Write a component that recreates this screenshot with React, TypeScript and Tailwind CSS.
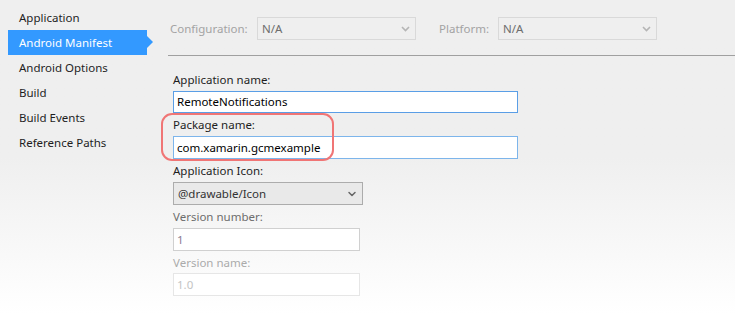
import { ChevronDown } from "lucide-react";

const navItems = [
  "Application",
  "Android Manifest",
  "Android Options",
  "Build",
  "Build Events",
  "Reference Paths",
];

function Chevron({ className }: { className?: string }) {
  return (
    <svg width="9" height="6" viewBox="0 0 9 6" className={className}>
      <path d="M1 1 L4.5 4.5 L8 1" fill="none" stroke="currentColor" strokeWidth="1.6" />
    </svg>
  );
}

function TopSelect({ label, value, labelWidth }: { label: string; value: string; labelWidth: string }) {
  return (
    <div className="flex items-center">
      <span className={`text-[#a3a3a3] ${labelWidth}`}>{label}</span>
      <div className="w-[159px] h-[23px] border border-[#d9d9d9] bg-[#efefef] flex items-center justify-between pl-[4px] pr-[5px]">
        <span className="text-[#6d6d6d]">{value}</span>
        <Chevron className="text-[#b5b5b5]" />
      </div>
    </div>
  );
}

export default function App() {
  return (
    <div
      className="w-[735px] h-[314px] flex text-[11.5px] bg-gradient-to-b from-[#efefef] from-50% to-[#ffffff] overflow-hidden relative"
      style={{ fontFamily: '"Noto Sans", "Open Sans", sans-serif' }}
    >
      {/* sidebar */}
      <div className="w-[160px] pt-[5px] shrink-0">
        {navItems.map((item) => {
          const active = item === "Android Manifest";
          return (
            <div key={item} className="relative h-[25px] flex items-center">
              {active && (
                <div className="absolute left-[8px] top-0 h-[25px] w-[139px] bg-[#3399ff]">
                  <div className="absolute right-[-6px] top-[6px] w-0 h-0 border-y-[6px] border-y-transparent border-l-[6px] border-l-[#3399ff]" />
                </div>
              )}
              <span className={`relative pl-[19px] ${active ? "text-white" : "text-[#1e1e1e]"}`}>{item}</span>
            </div>
          );
        })}
      </div>

      {/* main */}
      <div className="flex-1 flex flex-col">
        <div className="flex items-start gap-[23px] pl-[10px] pt-[17px] h-[55px]">
          <TopSelect label="Configuration:" value="N/A" labelWidth="w-[87px]" />
          <TopSelect label="Platform:" value="N/A" labelWidth="w-[59px]" />
        </div>
        <div className="ml-[8px] h-px bg-[#a0a0a0]" />

        <div className="pl-[13px] pt-[15px] flex flex-col">
          <div className="leading-[17px] text-[#1e1e1e]">Application name:</div>
          <div className="mt-[3px] w-[345px] h-[22px] border border-[#5a9ee6] bg-white flex items-center px-[3px] text-black">
            RemoteNotifications
          </div>

          <div className="mt-[3px] leading-[17px] text-[#1e1e1e]">Package name:</div>
          <div className="mt-[3px] w-[345px] h-[23px] border border-[#7db5eb] bg-white flex items-center px-[3px] text-black">
            com.xamarin.gcmexample
          </div>

          <div className="mt-[3px] leading-[17px] text-[#1e1e1e]">Application Icon:</div>
          <div className="mt-[3px] w-[190px] h-[23px] border border-[#acacac] bg-[#e9e9e9] flex items-center justify-between px-[4px] text-[#333]">
            <span>@drawable/Icon</span>
            <ChevronDown size={12} strokeWidth={3} className="text-[#666]" />
          </div>

          <div className="mt-[3px] leading-[17px] text-[#6d6d6d]">Version number:</div>
          <div className="mt-[3px] w-[187px] h-[23px] border border-[#d0d0d0] bg-white flex items-center px-[3px] text-[#8a7c93]">
            1
          </div>

          <div className="mt-[3px] leading-[17px] text-[#ababab]">Version name:</div>
          <div className="mt-[2px] w-[187px] h-[23px] border border-[#e6e6e6] bg-white flex items-center px-[3px] text-[#c4c4c4]">
            1.0
          </div>
        </div>
      </div>

      {/* annotation */}
      <div className="absolute left-[161px] top-[113px] w-[173px] h-[48px] border-2 border-[#f07575] rounded-[11px]" />
    </div>
  );
}
